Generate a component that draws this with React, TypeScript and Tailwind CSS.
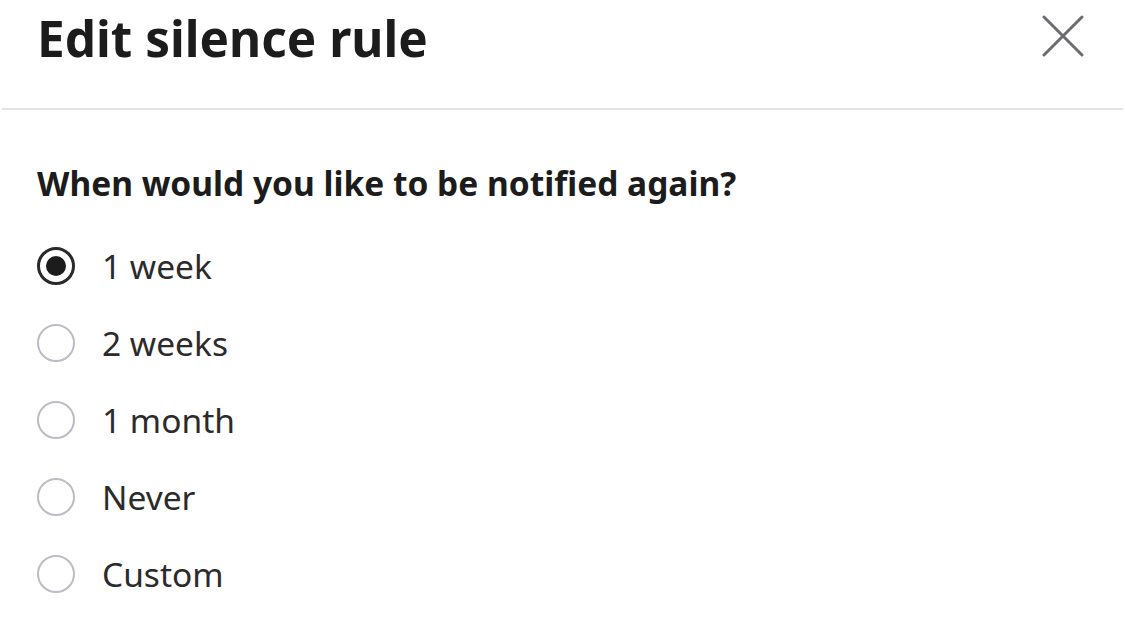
import React, { useState } from "react";

const options = ["1 week", "2 weeks", "1 month", "Never", "Custom"];

export default function App() {
  const [value, setValue] = useState("1 week");

  return (
    <div className="min-h-screen w-full bg-white text-[#1c1c1c]" style={{ fontFamily: '"Noto Sans", "Open Sans", sans-serif' }}>
      <div className="mx-[2px] flex h-[110px] items-start justify-between border-b-2 border-[#e3e3e6] pl-[35px] pr-[39px]">
        <h1 className="mt-[6px] text-[49.5px] font-bold leading-[64px]">Edit silence rule</h1>
        <button className="mt-[15px] flex h-[42px] w-[42px] items-center justify-center text-[#6b6b70]" aria-label="Close">
          <svg width="42" height="42" viewBox="0 0 42 42" fill="none" stroke="currentColor" strokeWidth="3" strokeLinecap="round">
            <path d="M2 2L40 40M40 2L2 40" />
          </svg>
        </button>
      </div>

      <div className="pl-[37px] pt-[53px]">
        <div className="text-[33.5px] font-bold leading-[40px] text-[#1c1c1c]">When would you like to be notified again?</div>
        <div className="mt-[24px] flex flex-col">
          {options.map((o) => {
            const on = value === o;
            return (
              <label key={o} className="flex h-[77px] cursor-pointer items-center gap-[27px]" onClick={() => setValue(o)}>
                <span
                  className={
                    on
                      ? "flex h-[38px] w-[38px] items-center justify-center rounded-full border-[3px] border-[#2a2a2a]"
                      : "flex h-[38px] w-[38px] items-center justify-center rounded-full border-2 border-[#bdbbc4]"
                  }
                >
                  {on && <span className="h-[20px] w-[20px] rounded-full bg-[#1c1c1c]" />}
                </span>
                <span className="text-[33.5px] leading-[40px] text-[#2b2b2b]">{o}</span>
              </label>
            );
          })}
        </div>
      </div>
    </div>
  );
}
